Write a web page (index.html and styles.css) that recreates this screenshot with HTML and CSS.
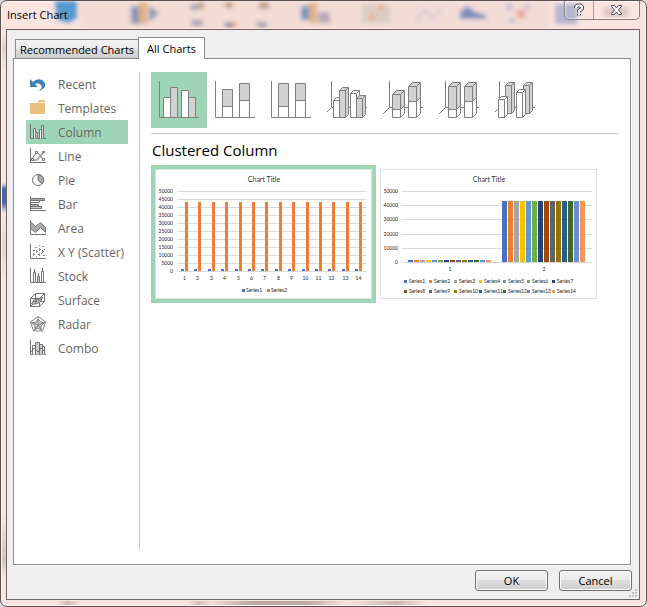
FILE: index.html
```html
<!DOCTYPE html>
<html lang="en">
<head>
<meta charset="utf-8">
<title>Insert Chart</title>
<link rel="stylesheet" href="styles.css">
</head>
<body>
<main class="window">
  <div class="glass" aria-hidden="true">
    <span class="edge left"></span>
    <svg class="blobs" width="647" height="28" viewBox="0 0 647 28">
      <defs><filter id="soft" x="-20%" y="-20%" width="140%" height="140%"><feGaussianBlur stdDeviation="2"/></filter></defs>
      <g filter="url(#soft)">
        <path fill="#f3dcd6" d="M80 0h470v28H80z"/>
        <path fill="#5597cf" d="M55 1h22v17l-9 5-11-4z"/>
        <path fill="#8796b8" d="M131 6h8v18h-8zM149 6l10 7-10 9z"/><path fill="#dfb382" d="M139 2h8v22h-8z"/>
        <path fill="#a9a4b2" d="M190 4h8v6h-8zM191 20h12v6h-12zM257 22h10v6h-10z"/><path fill="#c0a08e" d="M198 2h6v7h-6zM225 2h8v6h-8zM259 2h10v7h-10z"/><path fill="#8c8fae" d="M225 22h6v6h-6z"/><path fill="#d9a373" d="M231 22h5v6h-5z"/>
        <path fill="#7894bd" d="M301 6h8v14h-8z"/><path fill="#dfb382" d="M309 3h8v20h-8z"/><path fill="#b9a9b6" d="M318 12h12v11h-12z"/>
        <path fill="#dccdc2" d="M362 4h28v19h-28z"/><path fill="#efac8d" d="M378 5h6v5h-6zM370 14h5v5h-5z"/>
        <path fill="none" stroke="#d9c9d2" stroke-width="3" d="M416 21l9-11 9 8 8-9"/>
        <path fill="#7c90ba" d="M460 19v-8l8-5 7 6 11 3v4z"/>
        <path fill="#c4bed0" d="M506 4h6v6h-6zM524 4h6v5h-6zM509 18h6v5h-6z"/><path fill="#e8a49a" d="M517 10h8v8h-8z"/>
        <path fill="#b4b6cf" d="M555 4h22v20h-22z"/><path fill="#d9c4c4" d="M604 8h24v8h-24z"/>
      </g>
    </svg>
    <span class="edge foot"></span>
  </div>
  <header class="titlebar">
    <h1>Insert Chart</h1>
    <div class="caption">
      <button class="help" aria-label="Help"><svg width="12" height="14" viewBox="0 0 12 14"><path class="outline" d="M3 5V4l1.500-1.500h3L9 4v1.500L6 8v1.500M6 11v1.500"/><path class="glyph" d="M3 5V4l1.500-1.500h3L9 4v1.500L6 8v1.500M6 11v1.500"/></svg></button>
      <button class="close" aria-label="Close"><svg width="13" height="12" viewBox="0 0 13 12"><path fill="#fff" stroke="#4d4b60" d="M1.500 1.500h3l2 2.500 2-2.500h3v1L8.500 6l3 3.500v1h-3l-2-2.500-2 2.500h-3v-1l3-3.500-3-3.500z"/></svg></button>
    </div>
  </header>
  <section class="client">
    <div class="tabs" role="tablist">
      <button class="tab" role="tab" aria-selected="false">Recommended Charts</button>
      <button class="tab active" role="tab" aria-selected="true">All Charts</button>
    </div>
    <div class="panel" role="tabpanel">
      <nav class="types">
        <button><svg viewBox="0 0 16 16"><path fill="#3f7fb8" d="M0 11V3l3 3Q7 2 12 4q5 4 2 8l-4 3h-1q4-3 2-6-3-3-6-1l3 3z"/></svg>Recent</button>
        <button><svg viewBox="0 0 16 16"><path fill="#e8c07f" d="M0 3h8V1l1-1h5l1 1v13H0z"/><path stroke="#fff" fill="none" d="M9 2.500h5"/></svg>Templates</button>
        <button class="active"><svg class="ink" viewBox="0 0 16 16"><path d="M.5 0v14.500H16"/><path class="w" d="M3.500 14.500v-10h2v10M9.500 14.500v-9h2v9"/><path class="g" d="M5.500 14.500v-6h2v6M11.500 14.500v-13h2v13"/></svg>Column</button>
        <button><svg class="ink" viewBox="0 0 16 16"><path d="M.5 0v14.500H16"/><path class="pale" d="M2 12h5l7-8"/><path d="M2 11l4-6h2l5 6"/><path class="w" d="M1.500 10.500h2v2h-2zM5.500 3.500h2v2h-2zM12.500 10.500h2v2h-2zM12.500 3.500h2v1h-2z"/></svg>Line</button>
        <button><svg class="ink" viewBox="0 0 16 16"><circle cx="8" cy="8" r="5.500"/><path class="dark" d="M8 2.500V8l4 4a5.500 5.500 0 0 0-4-9.500z"/></svg>Pie</button>
        <button><svg class="ink" viewBox="0 0 16 16"><path class="dark" d="M.5 2.500h14v2H.5zM.5 8.500h8v2H.5z"/><path class="w" d="M.5 4.500h9v2H.5z"/><path class="g" d="M.5 10.500h11v2H.5z"/><path d="M.5 0v14.500H16"/></svg>Bar</button>
        <button><svg class="ink" viewBox="0 0 16 16"><path class="dark" d="M.5 12.500v-11l5 5 5-4 5 5v5l-5-5-5 5-5-4z"/><path d="M.5 0v14.500H16"/></svg>Area</button>
        <button><svg class="ink" viewBox="0 0 16 16"><path d="M.5 0v14.500H16"/><path class="dots" d="M3 10.500h2M6 7.500h2M5 3.500h2M9 5.500h2M12 2.500h2M12 7.500h2M8 10.500h2M13 11.500h2M3 6.500h2M9 1.500h1M11 9.500h1M6 12.500h1M14 5.500h1M6.500 6v3M3.500 9v3M9.500 4v3M12.500 6v3M9.500 9v3"/></svg>X Y (Scatter)</button>
        <button><svg class="ink" viewBox="0 0 16 16"><path d="M.5 0v14.500H16M4.500 1v3M8.500 5v3M12.500 0v3"/><path class="w" d="M3.500 4.500h2v10h-2zM11.500 3.500h2v11h-2z"/><path class="g" d="M7.500 8.500h2v6h-2z"/></svg>Stock</button>
        <button><svg class="ink" viewBox="0 0 16 16"><path d="M.5 6.500l5-5h9v8l-5 5h-9zM.5 6.500h9l5-5M9.500 6.500v8M5.500 1.500v8h9M5.500 9.500l-5 5"/><path class="g" d="M1.500 12l3-5q3 2 8-2l-2 5q-5 3-9 2zM3 9.500q4 1 8-2M7 7l-2 5"/></svg>Surface</button>
        <button><svg class="ink thin" viewBox="0 0 16 16"><path d="M8 .5L15.500 6l-3 9h-9l-3-9z"/><path class="g" d="M8 3l3 3 3 1-3 3v4l-3-2-3 2v-4L2 7l4-1z"/><path d="M8 .5V9l7.500-3M8 9l4.500 6M8 9l-4.500 6M8 9L.5 6"/></svg>Radar</button>
        <button><svg class="ink" viewBox="0 0 16 16"><path d="M.5 0v14.500H16"/><path class="w" d="M2.500 14.500v-9h3v9M12.500 14.500v-8h2v8"/><path class="g" d="M5.500 14.500v-12h4v12M9.500 14.500v-10h3v10"/><path d="M1 12l3-4 4 4 3-4 4 4"/></svg>Combo</button>
      </nav>
      <div class="detail">
        <div class="subtypes" id="subtypes"></div>
        <h2>Clustered Column</h2>
        <div class="previews">
          <button class="preview active" id="by-row" aria-label="Two series preview"></button>
          <button class="preview" id="by-column" aria-label="Fourteen series preview"></button>
        </div>
      </div>
    </div>
    <footer class="actions">
      <button>OK</button>
      <button>Cancel</button>
      <svg class="grip" width="9" height="9" viewBox="0 0 9 9" aria-hidden="true"><path d="M6 0h2v2H6zM3 3h2v2H3zM6 3h2v2H6zM0 6h2v2H0zM3 6h2v2H3zM6 6h2v2H6z"/></svg>
    </footer>
  </section>
</main>
<script src="charts.js"></script>
</body>
</html>
```
FILE: styles.css
```css
* { box-sizing: border-box; }
body {
  margin: 0;
  background: #d9d9d9;
  font-family: "Open Sans", "Noto Sans", sans-serif;
  font-size: 11px;
  color: #000;
}
button { font: inherit; color: inherit; margin: 0; padding: 0; border: 0; background: none; }
h1, h2 { margin: 0; font-weight: 400; }

.window {
  position: relative;
  display: flex;
  flex-direction: column;
  min-height: 100vh;
  padding: 0 6px 6px 5px;
  border: 1px solid #5c4f4f;
  border-radius: 7px;
  background: #fbe3df;
  box-shadow: inset 0 0 0 1px #fff2ef;
  overflow: hidden;
}
.glass { position: absolute; inset: 0; }
.blobs { position: absolute; left: -1px; top: -1px; }
.edge { position: absolute; }
.edge.left {
  left: 1px; top: 28px; bottom: 6px; width: 4px;
  background: linear-gradient(#fbe3df 0, #e6d0cf 20px, #fbe3df 40px, #fbe3df 154px, #4868ab 160px, #4868ab 174px, #fbe3df 184px, #e8d3d0 220px, #fbe3df 250px, #fbe3df 85%, #d9c1bf 93%, #fbe3df 96%);
}
.edge.foot {
  left: 6px; right: 6px; bottom: 1px; height: 4px;
  background: linear-gradient(90deg, #fbe3df 50px, #cdb9b6 60px, #fbe3df 75px, #fbe3df 180px, #d3bfbc 192px, #f3dcd8 205px, #b9a8a5 245px, #bbaaa7 300px, #fbe3df 340px, #c9b7b5 390px, #fbe3df 420px);
}

.titlebar { position: relative; display: flex; justify-content: space-between; height: 28px; }
.titlebar h1 { font-size: 11px; line-height: 28px; padding-left: 1px; }
.caption {
  display: flex;
  height: 19px;
  border: 1px solid #8b7c80;
  border-top: 0;
  border-radius: 0 0 5px 5px;
  box-shadow: inset 0 0 0 1px #ffffff80;
}
.caption button { display: grid; place-items: center; width: 28px; }
.caption .close { width: 46px; border-left: 1px solid #a8989b; }
.help path { fill: none; }
.outline { stroke: #4d4b60; stroke-width: 4; }
.glyph { stroke: #fff; stroke-width: 2; }

.client {
  position: relative;
  flex: 1;
  display: flex;
  flex-direction: column;
  padding: 7px 8px 8px 6px;
  border: 1px solid #6f6663;
  background: #efefef;
}
.tabs { display: flex; align-items: flex-end; padding-left: 2px; height: 22px; margin-bottom: -1px; z-index: 1; }
.tab {
  height: 20px;
  padding: 0 4px;
  border: 1px solid #898c95;
  border-right: 0;
  background: linear-gradient(#f2f2f2 0, #ebebeb 50%, #dddddd 50%, #cfcfcf 100%);
}
.tab.active {
  height: 22px;
  padding: 0 8px;
  border-right: 1px solid #898c95;
  border-bottom: 0;
  background: #fff;
}
.panel {
  flex: 1;
  display: flex;
  border: 1px solid #898c95;
  background: #fff;
  box-shadow: 1px 1px 0 #fff;
  padding: 13px 12px 14px 12px;
}
.types { width: 114px; padding-right: 11px; border-right: 1px solid #c6c6c6; display: flex; flex-direction: column; }
.types button {
  display: flex;
  align-items: center;
  gap: 12px;
  height: 24px;
  padding-left: 4px;
  font-size: 12px;
  color: #666;
  white-space: nowrap;
}
.types button.active { background: #9fd5b7; }
.types svg { width: 16px; height: 16px; flex: none; }
.ink path, .ink circle { fill: none; stroke: #737373; }
.ink .w { fill: #fff; }
.ink .g { fill: #cdcdcd; }
.ink .dark { fill: #ababab; }
.ink .pale { stroke: #b0b0b0; stroke-width: 2; }
.ink .dots { stroke: #8c8c8c; }
.thin path { stroke: #888; }

.detail { flex: 1; padding-left: 11px; min-width: 0; }
.subtypes { display: flex; height: 62px; border-bottom: 1px solid #c6c6c6; }
.subtypes button { width: 56px; height: 56px; }
.subtypes button.active { background: #9fd5b7; }
.subtypes svg { display: block; width: 56px; height: 56px; }
.subtypes path { fill: none; stroke: #7f7f7f; stroke-linejoin: round; }
.subtypes .w { fill: #fff; }
.subtypes .g { fill: #d2d2d2; }
h2 { font-size: 15px; line-height: 29px; padding: 2px 0 0 1px; }
.previews { display: flex; }
.preview { border: 4px solid transparent; }
.preview.active { border-color: #9fd5b7; }
.preview svg { display: block; width: 217px; height: 130px; border: 1px solid #dedede; background: #fff; }
.preview text { font-family: Lato, sans-serif; font-size: 5px; fill: #222; }
.preview .title { font-size: 7px; fill: #333; }
.grid { stroke: #d9d9d9; }

.actions { position: relative; display: flex; justify-content: flex-end; gap: 11px; padding-top: 5px; margin-right: -1px; }
.actions button {
  width: 73px;
  height: 21px;
  border: 1px solid #707070;
  border-radius: 3px;
  background: linear-gradient(#f3f3f3 0, #ebebeb 50%, #dddddd 50%, #cfcfcf 100%);
  box-shadow: inset 0 0 0 1px #fbfbfb;
}
.grip { position: absolute; right: -6px; bottom: -7px; fill: #c0c0c0; }
```
FILE: charts.js
```javascript
// Sub-type icons, drawn on a 56 x 56 tile.
const path = (cls, d) => `<path class="${cls}" d="${d}"/>`;
const flat = (cls, x, r, top, bottom) => path(cls, `M${x} ${bottom}V${top}H${r}V${bottom}Z`);
const solid = (cls, x, r, top, bottom, depth) =>
  path(cls, `M${x} ${bottom}V${top}l${depth} ${-depth}H${r + depth}V${bottom - depth}L${r} ${bottom}Z`) +
  path('', `M${x} ${top}H${r}V${bottom}M${r} ${top}l${depth} ${-depth}`);
const axes2d = path('', 'M8.5 9V45.5H48');
const axes3d = (x, y) => path('', `M${x} 9V35.5H48M${x} 35.5L8 ${y}`);
const tiles = [
  ['Clustered Column', axes2d + flat('w', 12.5, 19.5, 25.5, 45.5) + flat('g', 19.5, 26.5, 15.5, 45.5) +
    flat('w', 30.5, 37.5, 18.5, 45.5) + flat('g', 37.5, 44.5, 25.5, 45.5)],
  ['Stacked Column', axes2d + flat('g', 15.5, 25.5, 17.5, 34.5) + flat('w', 15.5, 25.5, 34.5, 45.5) +
    flat('g', 32.5, 42.5, 11.5, 28.5) + flat('w', 32.5, 42.5, 28.5, 45.5)],
  ['100% Stacked Column', axes2d + flat('g', 15.5, 25.5, 11.5, 34.5) + flat('w', 15.5, 25.5, 34.5, 45.5) +
    flat('g', 32.5, 42.5, 11.5, 28.5) + flat('w', 32.5, 42.5, 28.5, 45.5)],
  ['3-D Clustered Column', axes3d(12.5, 40) + solid('w', 14.5, 20.5, 28.5, 45.5, 3) + solid('g', 20.5, 26.5, 18.5, 45.5, 3) +
    solid('w', 31.5, 37.5, 21.5, 45.5, 3) + solid('g', 37.5, 43.5, 26.5, 45.5, 3)],
  ['3-D Stacked Column', axes3d(14.5, 42) + solid('w', 17.5, 25.5, 37.5, 45.5, 4) + solid('g', 17.5, 25.5, 22.5, 37.5, 4) +
    solid('w', 33.5, 41.5, 29.5, 45.5, 4) + solid('g', 33.5, 41.5, 14.5, 29.5, 4)],
  ['3-D 100% Stacked Column', axes3d(14.5, 42) + solid('w', 17.5, 25.5, 37.5, 45.5, 4) + solid('g', 17.5, 25.5, 14.5, 37.5, 4) +
    solid('w', 33.5, 41.5, 29.5, 45.5, 4) + solid('g', 33.5, 41.5, 14.5, 29.5, 4)],
  ['3-D Column', axes3d(12.5, 40) + solid('g', 18.5, 24.5, 13.5, 41.5, 3) + solid('w', 11.5, 17.5, 27.5, 45.5, 3) +
    solid('g', 36.5, 42.5, 13.5, 41.5, 3) + solid('w', 29.5, 35.5, 20.5, 45.5, 3)],
];
document.getElementById('subtypes').innerHTML = tiles.map(([name, art], i) =>
  `<button class="${i ? '' : 'active'}" aria-label="${name}"><svg viewBox="0 0 56 56">${art}</svg></button>`).join('');

// Preview charts.
const colors = ['#4472c4', '#ed7d31', '#a5a5a5', '#ffc000', '#5b9bd5', '#70ad47', '#264478',
  '#9e480e', '#636363', '#997300', '#255e91', '#43682b', '#698ed0', '#f1975a'];
const rect = (x, y, w, h, fill) => `<rect x="${x}" y="${y}" width="${w}" height="${h}" fill="${fill}"/>`;
const text = (x, y, anchor, s, cls = '') => `<text class="${cls}" x="${x}" y="${y}" text-anchor="${anchor}">${s}</text>`;

function frame(step, count, bottom) {
  let s = text(108, 12, 'middle', 'Chart Title', 'title');
  for (let i = 0; i <= count; i++) {
    const y = Math.round(bottom - i * (bottom - 21) / count);
    s += `<path class="grid" d="M21 ${y + 0.5}H211"/>` + text(17, y + 2, 'end', i * step);
  }
  return s;
}
const mount = (id, s) => {
  document.getElementById(id).innerHTML = `<svg viewBox="0 0 215 128">${s}</svg>`;
};

let rows = frame(5000, 10, 101);
for (let i = 0; i < 14; i++) {
  const x = Math.round(25 + i * 13.4);
  rows += rect(x, 99, 3, 2, colors[0]) + rect(x + 4, 32, 3, 69, colors[1]) + text(x + 3.5, 110, 'middle', i + 1);
}
rows += rect(86, 119, 3, 3, colors[0]) + text(90, 122, 'start', 'Series1') +
  rect(111, 119, 3, 3, colors[1]) + text(115, 122, 'start', 'Series2');
mount('by-row', rows);

let cols = frame(10000, 5, 92);
const legendX = [23, 48, 73, 98, 122, 146, 171];
colors.forEach((c, i) => {
  cols += rect(27 + i * 6, 90, 5, 2, c) + rect(121 + i * 6, 31, 5, 61, c);
  const x = legendX[i % 7];
  const y = i < 7 ? 110 : 120;
  cols += rect(x, y, 3, 3, c) + text(x + 5, y + 3, 'start', 'Series' + (i + 1));
});
cols += text(69, 101, 'middle', 1) + text(163, 101, 'middle', 2);
mount('by-column', cols);
```
